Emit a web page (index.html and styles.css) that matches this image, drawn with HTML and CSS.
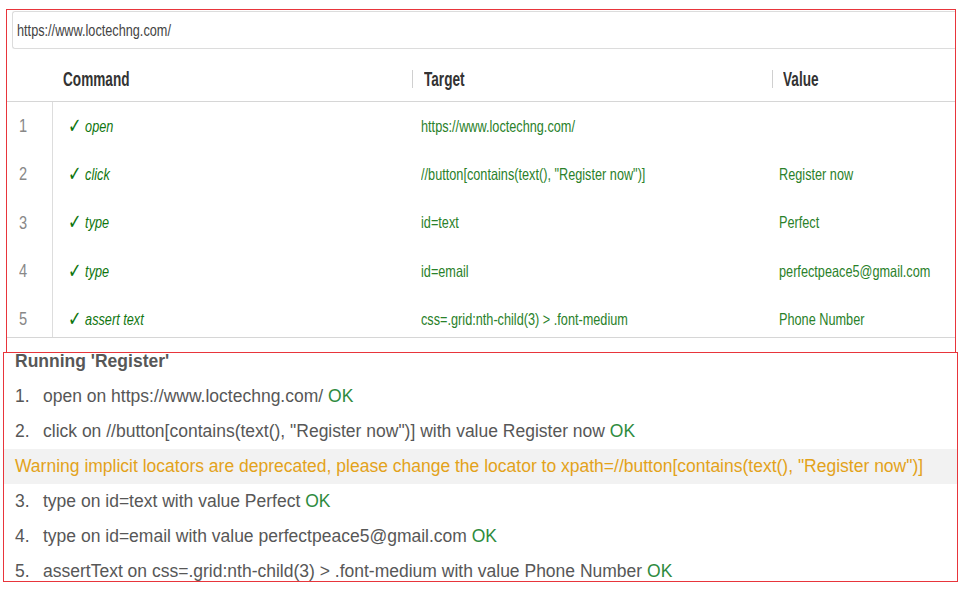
FILE: index.html
```html
<!DOCTYPE html>
<html>
<head>
<meta charset="utf-8">
<link rel="stylesheet" href="styles.css">
</head>
<body>
<div class="panel editor">
  <div class="url-input"><span class="sq">https://www.loctechng.com/</span></div>
  <div class="thead">
    <div class="th-num"></div>
    <div class="th th-cmd"><span class="sq sq-h">Command</span></div>
    <div class="th th-sep"><span class="sq sq-h">Target</span></div>
    <div class="th th-sep th-val"><span class="sq sq-h">Value</span></div>
  </div>
  <div class="tbody">
    <div class="tr">
      <div class="num"><span class="sq sq-n">1</span></div>
      <div class="cmd"><span class="sq"><span class="chk">✓</span> <i>open</i></span></div>
      <div class="tgt"><span class="sq">https://www.loctechng.com/</span></div>
      <div class="val"></div>
    </div>
    <div class="tr">
      <div class="num"><span class="sq sq-n">2</span></div>
      <div class="cmd"><span class="sq"><span class="chk">✓</span> <i>click</i></span></div>
      <div class="tgt"><span class="sq">//button[contains(text(), "Register now")]</span></div>
      <div class="val"><span class="sq">Register now</span></div>
    </div>
    <div class="tr">
      <div class="num"><span class="sq sq-n">3</span></div>
      <div class="cmd"><span class="sq"><span class="chk">✓</span> <i>type</i></span></div>
      <div class="tgt"><span class="sq">id=text</span></div>
      <div class="val"><span class="sq">Perfect</span></div>
    </div>
    <div class="tr">
      <div class="num"><span class="sq sq-n">4</span></div>
      <div class="cmd"><span class="sq"><span class="chk">✓</span> <i>type</i></span></div>
      <div class="tgt"><span class="sq">id=email</span></div>
      <div class="val"><span class="sq">perfectpeace5@gmail.com</span></div>
    </div>
    <div class="tr">
      <div class="num"><span class="sq sq-n">5</span></div>
      <div class="cmd"><span class="sq"><span class="chk">✓</span> <i>assert text</i></span></div>
      <div class="tgt"><span class="sq">css=.grid:nth-child(3) &gt; .font-medium</span></div>
      <div class="val"><span class="sq">Phone Number</span></div>
    </div>
  </div>
</div>
<div class="panel log">
  <div class="log-title">Running 'Register'</div>
  <ol class="log-list">
    <li class="log-item"><span class="idx">1.</span>open on https://www.loctechng.com/&nbsp;<span class="ok">OK</span></li>
    <li class="log-item"><span class="idx">2.</span>click on //button[contains(text(), "Register now")] with value Register now&nbsp;<span class="ok">OK</span></li>
    <li class="log-item warn">Warning implicit locators are deprecated, please change the locator to xpath=//button[contains(text(), "Register now")]</li>
    <li class="log-item"><span class="idx">3.</span>type on id=text with value Perfect&nbsp;<span class="ok">OK</span></li>
    <li class="log-item"><span class="idx">4.</span>type on id=email with value perfectpeace5@gmail.com&nbsp;<span class="ok">OK</span></li>
    <li class="log-item"><span class="idx">5.</span>assertText on css=.grid:nth-child(3) &gt; .font-medium with value Phone Number&nbsp;<span class="ok">OK</span></li>
  </ol>
</div>
</body>
</html>
```

FILE: styles.css
```css
html, body {
  margin: 0;
  padding: 0;
  background: #ffffff;
}
body {
  font-family: "Liberation Sans", Arial, sans-serif;
  width: 970px;
  height: 589px;
  overflow: hidden;
}
.panel {
  box-sizing: border-box;
  border: 1px solid #e8353b;
  background: #fff;
}
.editor {
  margin: 9px 0 0 6px;
  width: 950px;
  height: 344px;
  padding-top: 1px;
  overflow: hidden;
}
.sq {
  display: inline-block;
  white-space: nowrap;
  transform: scaleX(0.77);
  transform-origin: 0 50%;
}
.sq-h {
  transform: scaleX(0.68);
}
.url-input {
  box-sizing: border-box;
  margin-left: 5px;
  height: 38px;
  border: 1px solid #dcdcdc;
  border-right: none;
  border-radius: 3px 0 0 3px;
  padding-left: 4px;
  font-size: 16.5px;
  line-height: 36px;
  color: #444;
}
.thead {
  display: grid;
  grid-template-columns: 46px 359px 360px 1fr;
  height: 53px;
  box-sizing: border-box;
  border-bottom: 1px solid #d6d6d6;
  padding-top: 8px;
}
.th {
  font-size: 20px;
  font-weight: bold;
  color: #333;
  line-height: 44px;
  display: flex;
  align-items: center;
}
.th-cmd { padding-left: 10px; }
.th-sep { padding-left: 12px; }
.th-val { padding-left: 11px; }
.th-sep::before {
  content: "";
  width: 1px;
  height: 18px;
  background: #d0d0d0;
  margin-left: -12px;
  margin-right: 11px;
}
.th-val::before {
  margin-left: -11px;
  margin-right: 10px;
}
.tbody {
  height: 236px;
  box-sizing: border-box;
  border-bottom: 1px solid #d6d6d6;
  overflow: hidden;
  background: linear-gradient(#ddd, #ddd) 45px 0 / 1px 100% no-repeat;
}
.tr {
  display: grid;
  grid-template-columns: 46px 359px 360px 1fr;
  height: 48.3px;
  align-items: center;
  font-size: 16.5px;
  color: #2a812a;
}
.num {
  padding-left: 12px;
  font-size: 19px;
  color: #888;
}
.cmd {
  padding-left: 15px;
  color: #0f760f;
}
.cmd i {
  font-style: italic;
}
.chk {
  font-family: "DejaVu Sans", sans-serif;
  font-size: 21px;
  line-height: 16px;
  vertical-align: -1px;
}
.tgt { padding-left: 9px; }
.val { padding-left: 7px; }

.log {
  margin: -1px 0 0 3px;
  width: 955px;
  height: 230px;
  overflow: hidden;
  font-size: 17.5px;
  color: #575757;
}
.log-title {
  font-weight: bold;
  line-height: 17px;
  padding: 0 0 9px 11px;
}
.log-list {
  list-style: none;
  margin: 0;
  padding: 0;
}
.log-item {
  display: flex;
  height: 35px;
  line-height: 35px;
  padding-left: 11px;
  white-space: nowrap;
}
.idx {
  width: 28px;
  flex: none;
}
.ok { color: #2e8b3e; }
.warn {
  background: #f2f2f2;
  color: #e3a21a;
}
```
